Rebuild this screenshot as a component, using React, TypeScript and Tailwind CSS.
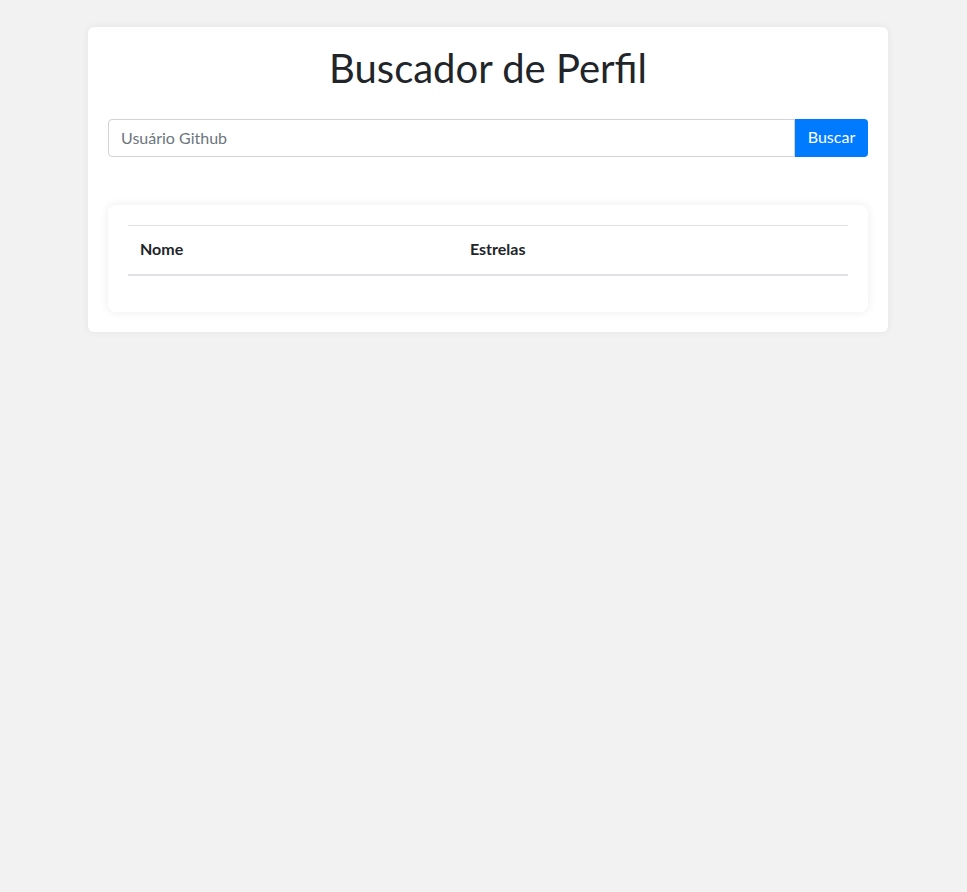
export default function App() {
  return (
    <div className="min-h-screen bg-[#f2f2f2] pt-[27px] font-['Lato','Liberation_Sans',sans-serif] text-[#212529]">
      <div className="ml-[88px] w-[800px] rounded-md bg-white p-5 shadow-[0_0_8px_rgba(0,0,0,0.06)]">
        <h1 className="-mt-[3px] mb-[27px] text-center text-[40px] leading-[48px] font-normal">Buscador de Perfil</h1>

        <div className="flex">
          <input
            type="text"
            placeholder="Usuário Github"
            className="h-[38px] flex-1 rounded-l-[4px] border border-[#ced4da] px-3 pb-[2px] text-base text-[#495057] placeholder:text-[#6c757d] outline-none"
          />
          <button className="h-[38px] w-[73px] rounded-r-[4px] bg-[#007bff] pb-[2px] text-base text-white">Buscar</button>
        </div>

        <div className="mt-12 rounded-lg bg-white p-5 shadow-[0_0_10px_rgba(0,0,0,0.08)]">
          <table className="mb-4 w-full border-collapse text-left">
            <thead>
              <tr>
                <th className="w-[330px] border-t border-b-2 border-t-[#dee2e6] border-b-[#dee2e6] px-3 pt-[11px] pb-[13px] text-base leading-6 font-bold">Nome</th>
                <th className="border-t border-b-2 border-t-[#dee2e6] border-b-[#dee2e6] px-3 pt-[11px] pb-[13px] text-base leading-6 font-bold">Estrelas</th>
              </tr>
            </thead>
            <tbody></tbody>
          </table>
        </div>
      </div>
    </div>
  )
}
